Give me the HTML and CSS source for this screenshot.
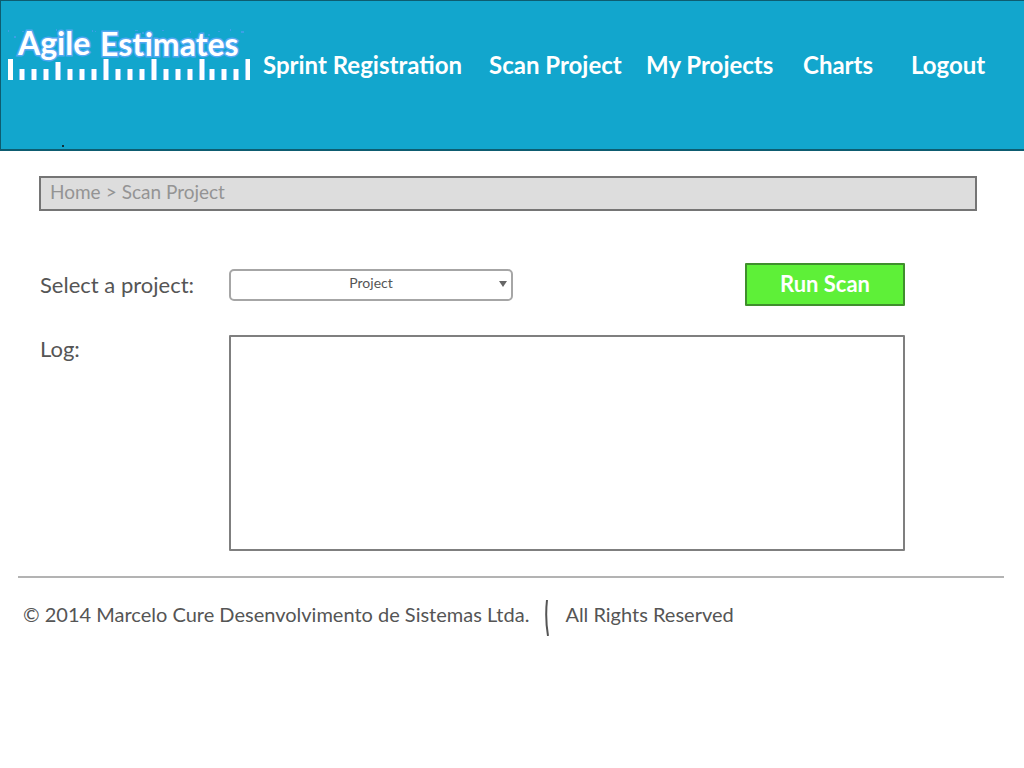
FILE: index.html
```html
<!DOCTYPE html>
<html lang="en">
<head>
<meta charset="utf-8">
<title>Agile Estimates - Scan Project</title>
<link rel="stylesheet" href="styles.css">
</head>
<body>
<header class="header">
  <div class="header-row">
    <svg class="logo" viewBox="0 -12 242 64" role="img" aria-label="Agile Estimates">
      <path class="logo-specks" d="M0 2h1v2H0zM6 8h2v2H6zM14 3h2v1h-2zM48 1h1v2h-1zM61 3h1v2h-1zM84 2h1v2h-1zM87 3h1v1h-1zM127 2h3v1h-3zM134 4h2v2h-2zM154 2h2v1h-2zM182 3h1v2h-1zM200 6h2v2h-2zM210 3h2v1h-2zM222 1h1v2h-1zM233 3h3v2h-3z"/>
      <text class="logo-text" x="10" y="27">Agile</text>
      <text class="logo-text" x="92" y="28">Estimates</text>
      <path class="logo-glow" d="M11 41h6v11h-6zM23 41h6v11h-6zM35 41h6v11h-6zM47 34h6v18h-6zM59 41h6v11h-6zM71 41h6v11h-6zM83 41h6v11h-6zM95 31h6v21h-6zM107 41h6v11h-6zM119 41h6v11h-6zM131 41h6v11h-6zM143 31h6v21h-6zM155 41h6v11h-6zM167 41h6v11h-6zM179 41h6v11h-6zM191 31h6v21h-6zM201 41h6v11h-6zM213 41h6v11h-6zM225 41h6v11h-6zM237 31h5v21h-5z"/>
      <path fill="#fff" d="M0 31h5v21H0zM12 41h4v11h-4zM24 41h4v11h-4zM36 41h4v11h-4zM48 34h4v18h-4zM60 41h4v11h-4zM72 41h4v11h-4zM84 41h4v11h-4zM96 31h4v21h-4zM108 41h4v11h-4zM120 41h4v11h-4zM132 41h4v11h-4zM144 31h4v21h-4zM156 41h4v11h-4zM168 41h4v11h-4zM180 41h4v11h-4zM192 31h4v21h-4zM202 41h4v11h-4zM214 41h4v11h-4zM226 41h4v11h-4zM238 31h4v21h-4z"/>
    </svg>
    <nav class="nav">
      <a href="#">Sprint Registration</a>
      <a href="#">Scan Project</a>
      <a href="#">My Projects</a>
      <a href="#">Charts</a>
      <a href="#">Logout</a>
    </nav>
  </div>
  <span class="dot"></span>
</header>
<main class="main">
  <nav class="breadcrumb">
    <a href="#">Home</a>
    <span>&gt;</span>
    <span>Scan Project</span>
  </nav>
  <form class="form">
    <div class="row">
      <label class="label" for="project">Select a project:</label>
      <div class="controls">
        <div class="select-wrap">
          <select class="select" id="project"><option>Project</option></select>
          <svg class="arrow" viewBox="0 0 8 6" aria-hidden="true"><path d="M0 0h8L4 6z" fill="#666"/></svg>
        </div>
        <button class="run" type="button">Run Scan</button>
      </div>
    </div>
    <div class="row row-log">
      <label class="label" for="log">Log:</label>
      <textarea class="log" id="log"></textarea>
    </div>
  </form>
</main>
<footer class="footer">
  <span>© 2014 Marcelo Cure Desenvolvimento de Sistemas Ltda.</span>
  <svg class="divider" viewBox="0 0 4 36" aria-hidden="true"><path d="M2 0Q0 18 3 36" fill="none" stroke="#555" stroke-width="2"/></svg>
  <span>All Rights Reserved</span>
</footer>
</body>
</html>
```
FILE: styles.css
```css
* { box-sizing: border-box; }
body {
  margin: 0;
  background: #fff;
  color: #555;
  font-family: Lato, "Open Sans", sans-serif;
  font-size: 22px;
  line-height: 28px;
}
a { color: inherit; text-decoration: none; }
.header {
  display: flex;
  flex-direction: column;
  min-height: 151px;
  padding: 15px 0 2px 7px;
  background: #12a6cd;
  border: solid #0d5c70;
  border-width: 1px 0 2px 1px;
}
.header-row { display: flex; align-items: flex-start; }
.logo { flex: none; width: 242px; height: 64px; overflow: visible; }
.logo-text {
  fill: #fff;
  stroke: #55a8f2;
  stroke-width: 3px;
  paint-order: stroke;
  font-size: 32px;
  font-weight: 700;
}
.logo-specks { fill: #3b9fe6; }
.logo-glow { fill: #8ec8f5; }
.nav {
  flex: 1;
  display: grid;
  grid-template-columns: 226fr 157fr 157fr 108fr 113fr;
  padding: 35px 0 0 13px;
  color: #fff;
  font-size: 24px;
  font-weight: 700;
  white-space: nowrap;
}
.dot {
  width: 2px;
  height: 2px;
  margin: auto 0 0 54px;
  background: #10303a;
}
.main { padding: 25px 47px 25px 39px; }
.breadcrumb {
  display: flex;
  gap: 5px;
  height: 35px;
  padding: 0 9px;
  background: #ddd;
  border: 2px solid #757575;
  color: #949494;
  font-size: 19px;
  line-height: 27px;
}
.form { padding: 52px 72px 0 0; }
.row { display: flex; align-items: center; }
.row-log { align-items: flex-start; margin-top: 29px; }
.label { flex: none; width: 190px; padding-left: 1px; }
.controls {
  flex: 1;
  display: flex;
  align-items: center;
  justify-content: space-between;
}
.select-wrap { position: relative; width: 284px; }
.select {
  display: block;
  appearance: none;
  width: 100%;
  height: 32px;
  padding: 0 2px 4px;
  background: #fff;
  border: 2px solid #a6a6a6;
  border-radius: 5px;
  color: #555;
  font: 14px Lato, "Open Sans", sans-serif;
  text-align: center;
  text-align-last: center;
}
.arrow {
  position: absolute;
  top: 12px;
  right: 6px;
  width: 8px;
  height: 6px;
  pointer-events: none;
}
.run {
  width: 160px;
  height: 43px;
  padding: 0 0 2px;
  background: #5ef038;
  border: 2px solid #3f8f2c;
  border-radius: 1px;
  color: #fff;
  font: 700 22px Lato, "Open Sans", sans-serif;
}
.log {
  flex: 1;
  height: 216px;
  padding: 8px;
  border: 2px solid #7f7f7f;
  border-radius: 1px;
  outline: 0;
  resize: none;
  font: 16px Lato, "Open Sans", sans-serif;
}
.footer {
  display: flex;
  align-items: flex-start;
  gap: 16px;
  margin: 0 20px 0 18px;
  padding: 22px 5px;
  border-top: 2px solid #b3b3b3;
  font-size: 20px;
}
.divider { flex: none; width: 4px; height: 36px; }
```
